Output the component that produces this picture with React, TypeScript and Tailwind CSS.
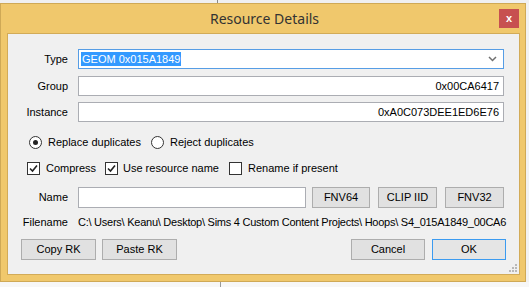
import React from 'react';

const font = { fontFamily: '"Liberation Sans", Arial, sans-serif' };

const Btn: React.FC<{ label: string; w: string; primary?: boolean }> = ({ label, w, primary }) => (
  <div
    className={`${w} h-[21px] flex items-center justify-center text-[11px] text-black border ${
      primary ? 'border-[#3c9bf0] bg-[#e5e5e5]' : 'border-[#adadad] bg-[#e1e1e1]'
    }`}
  >
    {label}
  </div>
);

const Check: React.FC = () => (
  <div className="w-[13px] h-[13px] border border-[#333] bg-white flex items-center justify-center">
    <svg width="9" height="9" viewBox="0 0 9 9">
      <path d="M1 4.5 L3.5 7 L8 1.5" fill="none" stroke="#222" strokeWidth="1.6" />
    </svg>
  </div>
);

export default function App() {
  return (
    <div className="w-[529px] h-[287px] bg-[#f2f2f2] flex flex-col overflow-hidden" style={font}>
      {/* desktop strip above window */}
      <div className="h-[3px] flex bg-[#f0f0f0]">
        <div className="ml-[217px] w-px h-full bg-[#8a8a8a]" />
      </div>

      {/* Window frame */}
      <div className="w-[526px] h-[279px] border border-[#cfa956] bg-[#f0c86c] flex flex-col pl-[6px] pr-[5px] pb-[6px]">
        {/* Title bar */}
        <div className="h-[29px] relative flex items-center justify-center">
          <span className="text-[14px] text-[#333] mt-[-1px] ml-[2px]" style={{ fontFamily: '"Noto Sans", "Open Sans", sans-serif' }}>
            Resource Details
          </span>
          <div className="absolute right-[1px] top-[5px] w-[20px] h-[19px] bg-[#c75050] flex items-center justify-center text-white text-[11px] font-bold leading-none">
            x
          </div>
        </div>

        {/* Client area */}
        <div className="relative flex-1 border border-[#d2ab58] bg-[#f0f0f0] flex flex-col pt-[15px] text-[11px] text-black">
          {/* Type */}
          <div className="flex items-center h-[20px]">
            <div className="w-[60px] text-right">Type</div>
            <div className="ml-[10px] w-[426px] h-[20px] border border-[#569de5] bg-white flex items-center pl-[2px] pr-[6px]">
              <span className="bg-[#3399ff] text-white px-[1px] leading-[14px]">GEOM 0x015A1849</span>
              <div className="flex-1" />
              <svg width="9" height="6" viewBox="0 0 9 6">
                <path d="M1 1 L4.5 4.5 L8 1" fill="none" stroke="#707070" strokeWidth="1.5" />
              </svg>
            </div>
          </div>

          {/* Group */}
          <div className="flex items-center h-[20px] mt-[7px]">
            <div className="w-[60px] text-right">Group</div>
            <div className="ml-[10px] w-[426px] h-[20px] border border-[#abadb3] bg-white flex items-center justify-end pr-[4px]">
              0x00CA6417
            </div>
          </div>

          {/* Instance */}
          <div className="flex items-center h-[20px] mt-[6px]">
            <div className="w-[60px] text-right">Instance</div>
            <div className="ml-[10px] w-[426px] h-[20px] border border-[#abadb3] bg-white flex items-center justify-end pr-[4px]">
              0xA0C073DEE1ED6E76
            </div>
          </div>

          {/* Radios */}
          <div className="flex items-center h-[15px] mt-[13px] pl-[21px]">
            <div className="w-[122px] flex items-center">
              <div className="w-[13px] h-[13px] rounded-full border border-[#333] bg-white flex items-center justify-center">
                <div className="w-[5px] h-[5px] rounded-full bg-[#222]" />
              </div>
              <span className="ml-[6px]">Replace duplicates</span>
            </div>
            <div className="flex items-center">
              <div className="w-[13px] h-[13px] rounded-full border border-[#333] bg-white" />
              <span className="ml-[6px]">Reject duplicates</span>
            </div>
          </div>

          {/* Checkboxes */}
          <div className="flex items-center h-[15px] mt-[11px] pl-[19px]">
            <div className="w-[78px] flex items-center">
              <Check />
              <span className="ml-[6px]">Compress</span>
            </div>
            <div className="w-[124px] flex items-center">
              <Check />
              <span className="ml-[5px]">Use resource name</span>
            </div>
            <div className="flex items-center">
              <div className="w-[13px] h-[13px] border border-[#333] bg-white" />
              <span className="ml-[6px]">Rename if present</span>
            </div>
          </div>

          {/* Name */}
          <div className="flex items-center h-[21px] mt-[11px]">
            <div className="w-[60px] text-right">Name</div>
            <div className="ml-[10px] w-[228px] h-[21px] border border-[#abadb3] bg-white" />
            <div className="ml-[6px] flex gap-[8px]">
              <Btn label="FNV64" w="w-[58px]" />
              <Btn label="CLIP IID" w="w-[59px]" />
              <Btn label="FNV32" w="w-[59px]" />
            </div>
          </div>

          {/* Filename */}
          <div className="flex items-center h-[14px] mt-[7px]">
            <div className="w-[60px] text-right">Filename</div>
            <div className="ml-[10px] whitespace-nowrap tracking-[-0.25px]">
              C:\ Users\ Keanu\ Desktop\ Sims 4 Custom Content Projects\ Hoops\ S4_015A1849_00CA6
            </div>
          </div>

          {/* Bottom buttons */}
          <div className="flex items-center h-[21px] mt-[10px] pl-[13px] pr-[13px]">
            <Btn label="Copy RK" w="w-[75px]" />
            <div className="ml-[6px]">
              <Btn label="Paste RK" w="w-[75px]" />
            </div>
            <div className="flex-1" />
            <Btn label="Cancel" w="w-[74px]" />
            <div className="ml-[7px]">
              <Btn label="OK" w="w-[74px]" primary />
            </div>
          </div>

          {/* Resize grip */}
          <svg className="absolute right-[2px] bottom-[2px]" width="8" height="8" viewBox="0 0 8 8">
            <rect x="6" y="0" width="2" height="2" fill="#b8b8b8" />
            <rect x="3" y="3" width="2" height="2" fill="#b8b8b8" />
            <rect x="6" y="3" width="2" height="2" fill="#b8b8b8" />
            <rect x="0" y="6" width="2" height="2" fill="#b8b8b8" />
            <rect x="3" y="6" width="2" height="2" fill="#b8b8b8" />
            <rect x="6" y="6" width="2" height="2" fill="#b8b8b8" />
          </svg>
        </div>
      </div>

      {/* desktop strip below window */}
      <div className="flex-1 flex bg-[#f7f7f7]">
        <div className="ml-[220px] w-px h-full bg-[#9a9a9a]" />
      </div>
    </div>
  );
}
